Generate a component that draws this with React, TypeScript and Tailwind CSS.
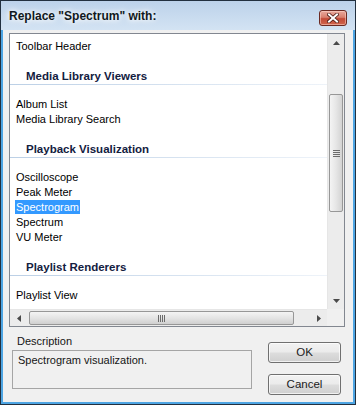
import React from "react";

const font = "font-['Liberation_Sans',Arial,sans-serif]";

function Item({ text, selected }: { text: string; selected?: boolean }) {
  return (
    <div className="h-[15px] pl-[5px] leading-[15px] whitespace-nowrap">
      {selected ? (
        <span className="inline-block h-[14px] leading-[14px] px-[1px] bg-[#3399ff] text-white align-top">
          {text}
        </span>
      ) : (
        <span className="px-[1px]">{text}</span>
      )}
    </div>
  );
}

function Group({ title, items, selected }: { title: string; items: string[]; selected?: string }) {
  return (
    <div className="mt-[15px]">
      <div className="h-[15px] pl-[16px] leading-[15px] font-bold text-[11.5px] text-[#13203f] whitespace-nowrap">
        {title}
      </div>
      <div className="h-px bg-gradient-to-r from-[#bcd0e6] to-[#eef3f9]" />
      <div className="mt-[12px]">
        {items.map((t) => (
          <Item key={t} text={t} selected={t === selected} />
        ))}
      </div>
    </div>
  );
}

function Arrow({ dir }: { dir: "up" | "down" | "left" | "right" }) {
  const pts =
    dir === "up"
      ? "0,4 3.5,0 7,4"
      : dir === "down"
      ? "0,0 3.5,4 7,0"
      : dir === "left"
      ? "4,0 0,3.5 4,7"
      : "0,0 4,3.5 0,7";
  const w = dir === "up" || dir === "down" ? 7 : 4;
  const h = dir === "up" || dir === "down" ? 4 : 7;
  return (
    <svg width={w} height={h} viewBox={`0 0 ${w} ${h}`}>
      <polygon points={pts} fill="#4a4a4a" />
    </svg>
  );
}

function VScroll() {
  return (
    <div className="w-[17px] flex flex-col bg-[#ececec] border-l border-[#e6e6e6]">
      <div className="h-[17px] flex items-center justify-center">
        <Arrow dir="up" />
      </div>
      <div className="flex-1 flex flex-col">
        <div className="h-[43px]" />
        <div className="mx-px h-[118px] rounded-[2px] border border-[#979797] bg-gradient-to-r from-[#f4f4f4] via-[#e6e6e6] to-[#d3d3d3] flex flex-col items-center justify-center gap-[1px]">
          <div className="w-[7px] h-px bg-[#6b6b6b]" />
          <div className="w-[7px] h-px bg-[#6b6b6b]" />
          <div className="w-[7px] h-px bg-[#6b6b6b]" />
          <div className="w-[7px] h-px bg-[#6b6b6b]" />
        </div>
      </div>
      <div className="h-[17px] flex items-center justify-center">
        <Arrow dir="down" />
      </div>
    </div>
  );
}

function HScroll() {
  return (
    <div className="flex-1 flex bg-[#ececec] border-t border-[#e6e6e6]">
      <div className="w-[17px] flex items-center justify-center">
        <Arrow dir="left" />
      </div>
      <div className="flex-1 flex items-stretch">
        <div className="w-[2px]" />
        <div className="my-px w-[265px] rounded-[2px] border border-[#979797] bg-gradient-to-b from-[#f4f4f4] via-[#e4e4e4] to-[#cfcfcf] flex items-center justify-center gap-[1px]">
          <div className="w-px h-[7px] bg-[#6b6b6b]" />
          <div className="w-px h-[7px] bg-[#6b6b6b]" />
          <div className="w-px h-[7px] bg-[#6b6b6b]" />
          <div className="w-px h-[7px] bg-[#6b6b6b]" />
        </div>
      </div>
      <div className="w-[17px] flex items-center justify-center">
        <Arrow dir="right" />
      </div>
    </div>
  );
}

function Button({ label }: { label: string }) {
  return (
    <div className="w-[73px] h-[21px] rounded-[3px] border border-[#707070] bg-[linear-gradient(to_bottom,#f2f2f2_0%,#ebebeb_48%,#dddddd_52%,#cfcfcf_100%)] flex items-center justify-center text-[11.5px] text-[#1b1b1b] shadow-[inset_0_0_0_1px_rgba(255,255,255,0.7)]">
      {label}
    </div>
  );
}

function CloseButton() {
  return (
    <div className="mt-[9px] w-[28px] h-[16px] rounded-[3px] border border-[#6b2a22] bg-[linear-gradient(to_bottom,#e9a99d_0%,#d9806f_45%,#c24a37_55%,#d0664d_100%)] flex items-center justify-center shadow-[inset_0_0_0_1px_rgba(255,220,210,0.5)]">
      <svg width="12" height="10" viewBox="0 0 12 10">
        <path d="M2 1.5 L10 8.5 M10 1.5 L2 8.5" stroke="#4a1a14" strokeWidth="3.6" strokeLinecap="square" />
        <path d="M2 1.5 L10 8.5 M10 1.5 L2 8.5" stroke="#ffffff" strokeWidth="2" strokeLinecap="square" />
      </svg>
    </div>
  );
}

export default function App() {
  return (
    <div
      className={`w-[356px] h-[405px] border border-[#22303f] bg-[#4ea5e3] flex flex-col ${font}`}
    >
      <div className="h-[29px] flex justify-between pl-[8px] pr-[8px] bg-gradient-to-b from-[#bcd2ea] to-[#d3e3f3]">
        <div className="h-[30px] flex items-center text-[12px] font-bold text-[#101820] [text-shadow:0_0_5px_#ffffff,0_0_8px_#ffffff]">
          Replace "Spectrum" with:
        </div>
        <CloseButton />
      </div>
      <div className="flex-1 mx-[2px] mb-[2px] bg-[#f0f0f0] flex flex-col text-[11px] text-black">
        <div className="ml-[6px] mt-[3px] w-[336px] h-[294px] border border-[#828790] bg-white flex flex-col">
          <div className="flex flex-1 min-h-0">
            <div className="flex-1 overflow-hidden pt-[5px] text-[11px]">
              <Item text="Toolbar Header" />
              <Group title="Media Library Viewers" items={["Album List", "Media Library Search"]} />
              <Group
                title="Playback Visualization"
                items={["Oscilloscope", "Peak Meter", "Spectrogram", "Spectrum", "VU Meter"]}
                selected="Spectrogram"
              />
              <Group title="Playlist Renderers" items={["Playlist View"]} />
            </div>
            <VScroll />
          </div>
          <div className="flex h-[17px]">
            <HScroll />
            <div className="w-[17px] bg-[#f0f0f0]" />
          </div>
        </div>
        <div className="flex mt-[7px]">
          <div className="ml-[9px] w-[240px] flex flex-col">
            <div className="h-[15px] leading-[15px] pl-[5px] text-[#151515]">Description</div>
            <div className="mt-[1px] h-[39px] border border-[#a5a5a5] pl-[5px] pt-[2px] leading-[15px] text-[#151515]">
              Spectrogram visualization.
            </div>
          </div>
          <div className="ml-[16px] mt-[8px] flex flex-col gap-[11px]">
            <Button label="OK" />
            <Button label="Cancel" />
          </div>
        </div>
      </div>
    </div>
  );
}
